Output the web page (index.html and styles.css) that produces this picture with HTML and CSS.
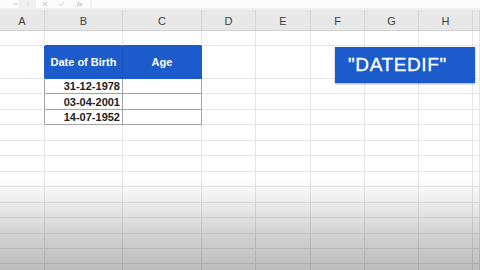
FILE: index.html
```html
<!DOCTYPE html>
<html>
<head>
<meta charset="utf-8">
<link rel="stylesheet" href="styles.css">
</head>
<body>
<div class="app">
  <div class="fbar">
    <div class="namebox">
      <svg class="caret" width="5" height="4" viewBox="0 0 5 4"><path d="M0.5 1 L2.5 3 L4.5 1" fill="none" stroke="#b5b5b5" stroke-width="0.8"/></svg>
    </div>
    <div class="dots">
      <svg width="2" height="8" viewBox="0 0 2 8"><circle cx="1" cy="2" r="0.6" fill="#c6c6c6"/><circle cx="1" cy="4" r="0.6" fill="#c6c6c6"/><circle cx="1" cy="6" r="0.6" fill="#c6c6c6"/></svg>
    </div>
    <div class="fbtns">
      <svg width="6" height="6" viewBox="0 0 6 6"><path d="M1 1 L5 5 M5 1 L1 5" stroke="#c2c2c2" stroke-width="0.8"/></svg>
      <svg width="7" height="6" viewBox="0 0 7 6"><path d="M1 3.2 L2.7 5 L6 1" fill="none" stroke="#c2c2c2" stroke-width="0.8"/></svg>
      <span class="fx">fx</span>
    </div>
    <div class="finput"></div>
  </div>
  <div class="cols">
    <div class="h">A</div><div class="h">B</div><div class="h">C</div><div class="h">D</div><div class="h">E</div><div class="h">F</div><div class="h">G</div><div class="h">H</div><div class="h"></div>
  </div>
  <div class="sheet">
    <div class="c"></div><div class="c tb"></div><div class="c tb"></div><div class="c"></div><div class="c"></div><div class="c"></div><div class="c"></div><div class="c"></div><div class="c"></div>
    <div class="c lb"></div><div class="c hd">Date of Birth</div><div class="c hd last">Age</div><div class="c"></div><div class="c"></div><div class="c"></div><div class="c"></div><div class="c"></div><div class="c"></div>
    <div class="c tl"></div><div class="c td">31-12-1978</div><div class="c td"></div><div class="c"></div><div class="c"></div><div class="c"></div><div class="c"></div><div class="c"></div><div class="c"></div>
    <div class="c tl"></div><div class="c td">03-04-2001</div><div class="c td"></div><div class="c"></div><div class="c"></div><div class="c"></div><div class="c"></div><div class="c"></div><div class="c"></div>
    <div class="c tl"></div><div class="c td">14-07-1952</div><div class="c td"></div><div class="c"></div><div class="c"></div><div class="c"></div><div class="c"></div><div class="c"></div><div class="c"></div>
    <div class="c"></div><div class="c"></div><div class="c"></div><div class="c"></div><div class="c"></div><div class="c"></div><div class="c"></div><div class="c"></div><div class="c"></div>
    <div class="c"></div><div class="c"></div><div class="c"></div><div class="c"></div><div class="c"></div><div class="c"></div><div class="c"></div><div class="c"></div><div class="c"></div>
    <div class="c"></div><div class="c"></div><div class="c"></div><div class="c"></div><div class="c"></div><div class="c"></div><div class="c"></div><div class="c"></div><div class="c"></div>
    <div class="c"></div><div class="c"></div><div class="c"></div><div class="c"></div><div class="c"></div><div class="c"></div><div class="c"></div><div class="c"></div><div class="c"></div>
    <div class="c"></div><div class="c"></div><div class="c"></div><div class="c"></div><div class="c"></div><div class="c"></div><div class="c"></div><div class="c"></div><div class="c"></div>
    <div class="c"></div><div class="c"></div><div class="c"></div><div class="c"></div><div class="c"></div><div class="c"></div><div class="c"></div><div class="c"></div><div class="c"></div>
    <div class="c"></div><div class="c"></div><div class="c"></div><div class="c"></div><div class="c"></div><div class="c"></div><div class="c"></div><div class="c"></div><div class="c"></div>
    <div class="c"></div><div class="c"></div><div class="c"></div><div class="c"></div><div class="c"></div><div class="c"></div><div class="c"></div><div class="c"></div><div class="c"></div>
    <div class="c"></div><div class="c"></div><div class="c"></div><div class="c"></div><div class="c"></div><div class="c"></div><div class="c"></div><div class="c"></div><div class="c"></div>
    <div class="c"></div><div class="c"></div><div class="c"></div><div class="c"></div><div class="c"></div><div class="c"></div><div class="c"></div><div class="c"></div><div class="c"></div>
  </div>
  <div class="callout">"DATEDIF"</div>
  <div class="shade"></div>
</div>
</body>
</html>
```

FILE: styles.css
```css
html, body {
  margin: 0;
  padding: 0;
  background: #ffffff;
}
.app {
  position: relative;
  width: 480px;
  height: 270px;
  overflow: hidden;
  font-family: "Liberation Sans", Arial, sans-serif;
}
.fbar {
  height: 10px;
  background: #f0f0f0;
  display: flex;
  align-items: flex-start;
}
.namebox {
  width: 19px;
  height: 8px;
  background: #fcfcfc;
  display: flex;
  justify-content: flex-end;
  align-items: center;
  padding-right: 1px;
  box-sizing: border-box;
}
.caret {
  display: block;
}
.dots {
  width: 17px;
  height: 8px;
  display: flex;
  justify-content: center;
}
.dots svg {
  display: block;
}
.fbtns {
  width: 54px;
  height: 8px;
  background: #fcfcfc;
  display: flex;
  align-items: center;
  gap: 10px;
  padding-left: 6px;
  box-sizing: border-box;
}
.fbtns svg {
  display: block;
}
.fx {
  font-style: italic;
  font-family: "Liberation Serif", serif;
  font-size: 7px;
  line-height: 8px;
  color: #9a9a9a;
  margin-left: 2px;
}
.finput {
  flex: 1;
  height: 8px;
  margin-left: 2px;
  background: #fcfcfc;
}
.cols, .sheet {
  display: grid;
  grid-template-columns: 45px 78px 79px 54px 55px 54px 54px 54px 1fr;
}
.cols {
  height: 21px;
  background: #e8e8e8;
  border-bottom: 1px solid #d2d2d2;
  box-sizing: border-box;
}
.h {
  border-right: 1px solid #d7d7d7;
  font-size: 11px;
  color: #404040;
  display: flex;
  align-items: center;
  justify-content: center;
  padding-top: 1px;
}
.sheet {
  grid-template-rows: 15px 33px 15px 16px 15px 16px 15px 16px 15px 16px 15px 16px 15px 15px 16px;
}
.c {
  box-sizing: border-box;
  border-right: 1px solid #e6e6e6;
  border-bottom: 1px solid #e6e6e6;
}
.tb {
  border-bottom-color: #1c5bcb;
}
.lb {
  border-right-color: #1c5bcb;
}
.hd {
  background: #1c5bcb;
  border-bottom-color: #1c5bcb;
  border-right-color: #1a51b5;
  color: #ffffff;
  font-weight: bold;
  font-size: 11px;
  display: flex;
  align-items: center;
  justify-content: center;
  padding-bottom: 1px;
}
.hd.last {
  border-right-color: #1c5bcb;
}
.tl {
  border-right-color: #a3a3a3;
}
.td {
  border-right-color: #a3a3a3;
  border-bottom-color: #a3a3a3;
  font-weight: bold;
  font-size: 11px;
  color: #222222;
  display: flex;
  align-items: center;
  justify-content: flex-end;
  padding-right: 2px;
}
.callout {
  position: absolute;
  left: 335px;
  top: 47px;
  width: 140px;
  height: 36px;
  background: #1c5bcb;
  box-shadow: 0 1px 2px rgba(0, 0, 0, 0.35);
  color: #ffffff;
  font-size: 19px;
  letter-spacing: 0.6px;
  -webkit-text-stroke: 0.3px #ffffff;
  display: flex;
  align-items: center;
  padding-left: 13px;
  box-sizing: border-box;
}
.shade {
  position: absolute;
  left: 0;
  right: 0;
  top: 178px;
  bottom: 0;
  background: linear-gradient(to bottom, rgba(0, 0, 0, 0) 0%, rgba(0, 0, 0, 0.07) 25%, rgba(0, 0, 0, 0.19) 65%, rgba(0, 0, 0, 0.26) 100%);
  pointer-events: none;
}
```
